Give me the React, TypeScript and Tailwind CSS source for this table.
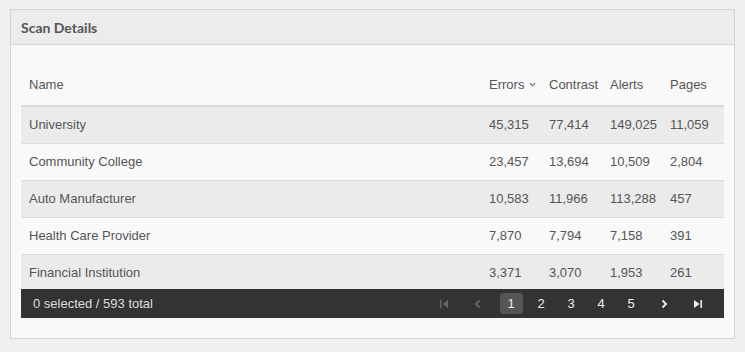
import React from "react";

interface Row {
  name: string;
  errors: string;
  contrast: string;
  alerts: string;
  pages: string;
}

const rows: Row[] = [
  { name: "University", errors: "45,315", contrast: "77,414", alerts: "149,025", pages: "11,059" },
  { name: "Community College", errors: "23,457", contrast: "13,694", alerts: "10,509", pages: "2,804" },
  { name: "Auto Manufacturer", errors: "10,583", contrast: "11,966", alerts: "113,288", pages: "457" },
  { name: "Health Care Provider", errors: "7,870", contrast: "7,794", alerts: "7,158", pages: "391" },
  { name: "Financial Institution", errors: "3,371", contrast: "3,070", alerts: "1,953", pages: "261" },
];

const cols = "grid grid-cols-[1fr_60px_61px_60px_62px]";

const FirstIcon = ({ className }: { className?: string }) => (
  <svg viewBox="0 0 10 10" className={className} fill="currentColor">
    <rect x="1" y="1" width="1.6" height="8" />
    <path d="M9 1 L9 9 L3.4 5 Z" />
  </svg>
);

const LastIcon = ({ className }: { className?: string }) => (
  <svg viewBox="0 0 10 10" className={className} fill="currentColor">
    <path d="M1 1 L1 9 L6.6 5 Z" />
    <rect x="7.4" y="1" width="1.6" height="8" />
  </svg>
);

const Chevron = ({ dir, className }: { dir: "left" | "right"; className?: string }) => (
  <svg viewBox="0 0 10 10" className={className} fill="none" stroke="currentColor" strokeWidth="1.8">
    {dir === "left" ? <path d="M6.5 1.5 L3 5 L6.5 8.5" /> : <path d="M3.5 1.5 L7 5 L3.5 8.5" />}
  </svg>
);

export default function App() {
  return (
    <div className="min-h-[352px] w-[745px] bg-[#f0f0f0] pt-[9px] pl-[10px] font-['Liberation_Sans',Arial,sans-serif]">
      <div className="w-[725px] border border-[#d5d5d5] bg-[#f9f9f9]">
        <div className="flex h-[35px] items-center border-b border-[#d5d5d5] bg-[#ececec] px-[10px]">
          <span className="font-['Lato',sans-serif] text-[14px] font-bold text-[#555]">Scan Details</span>
        </div>

        <div className="px-[10px] pt-[10px] pb-[20px]">
          <div className={`${cols} h-[52px] items-end border-b-2 border-[#d9d9d9] pb-[11px] text-[13px] text-[#555]`}>
            <div className="pl-2">Name</div>
            <div className="flex items-center gap-[5px] pl-2">
              Errors
              <svg viewBox="0 0 8 5" className="h-[5px] w-[7px]" fill="none" stroke="#666" strokeWidth="1.3">
                <path d="M1 1 L4 4 L7 1" />
              </svg>
            </div>
            <div className="pl-2">Contrast</div>
            <div className="pl-2">Alerts</div>
            <div className="pl-2">Pages</div>
          </div>

          {rows.map((r, i) => (
            <div
              key={r.name}
              className={`${cols} items-center text-[13px] text-[#555] ${i % 2 === 0 ? "bg-[#ebebeb]" : "bg-[#f9f9f9]"} ${i < rows.length - 1 ? "h-[37px] border-b border-[#dcdcdc]" : "h-[34px] pt-[1px]"}`}
            >
              <div className="pl-2">{r.name}</div>
              <div className="pl-2">{r.errors}</div>
              <div className="pl-2">{r.contrast}</div>
              <div className="pl-2">{r.alerts}</div>
              <div className="pl-2">{r.pages}</div>
            </div>
          ))}

          <div className="flex h-[29px] items-center justify-between bg-[#333] pl-3 pr-[10px] text-[13px]">
            <span className="text-[#ddd]">0 selected / 593 total</span>
            <div className="flex items-center">
              <div className="flex w-[30px] justify-center text-[#666]">
                <FirstIcon className="h-[10px] w-[10px]" />
              </div>
              <div className="flex w-[37px] justify-center text-[#666]">
                <Chevron dir="left" className="h-[10px] w-[10px]" />
              </div>
              {[1, 2, 3, 4, 5].map((n) => (
                <div key={n} className="flex w-[30px] justify-center">
                  <span
                    className={`flex h-[21px] w-[23px] items-center justify-center rounded-[3px] text-[#eee] ${n === 1 ? "bg-[#555]" : ""}`}
                  >
                    {n}
                  </span>
                </div>
              ))}
              <div className="flex w-[36px] justify-center text-[#eee]">
                <Chevron dir="right" className="h-[10px] w-[10px]" />
              </div>
              <div className="flex w-[32px] justify-center text-[#eee]">
                <LastIcon className="h-[10px] w-[10px]" />
              </div>
            </div>
          </div>
        </div>
      </div>
    </div>
  );
}
